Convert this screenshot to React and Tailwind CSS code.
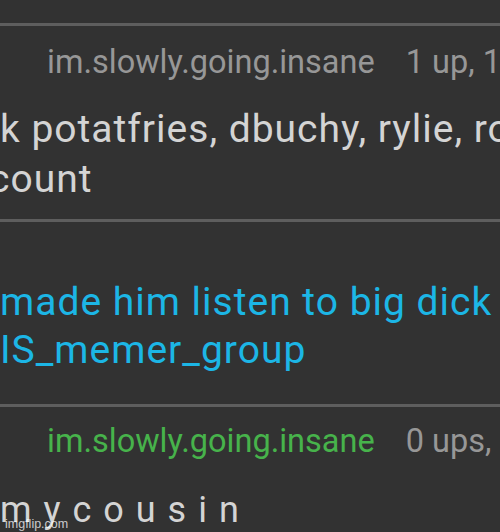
export default function App() {
  return (
    <div
      className="relative w-[500px] h-[532px] overflow-hidden bg-[#323232] flex flex-col"
      style={{ fontFamily: "Roboto, 'Noto Sans', sans-serif" }}
    >
      <div className="h-[23px] shrink-0" />
      <div className="h-[3px] shrink-0 bg-[#5e5e5e]" />
      <div className="mt-[16px] flex whitespace-nowrap pl-[47px] text-[32.5px] leading-[40px] text-[#979797]">
        <span>im.slowly.going.insane</span>
        <span className="ml-[31px]">1 up, 1 reply</span>
      </div>
      <div className="mt-[22px] whitespace-nowrap text-[39px] leading-[50px] tracking-[1px] text-[#d4d4d4]">
        <div>k potatfries, dbuchy, rylie, ro</div>
        <div className="-ml-[11px]">count</div>
      </div>
      <div className="mt-[15px] h-[3px] shrink-0 bg-[#5e5e5e]" />
      <div className="mt-[56px] whitespace-nowrap text-[39px] leading-[48px] tracking-[1px] text-[#1cb6e6]">
        <div>made him listen to big dick</div>
        <div>IS_memer_group</div>
      </div>
      <div className="mt-[30px] h-[3px] shrink-0 bg-[#5e5e5e]" />
      <div className="mt-[14px] flex whitespace-nowrap pl-[47px] text-[32.5px] leading-[40px]">
        <span className="text-[#47b34b]">im.slowly.going.insane</span>
        <span className="ml-[31px] text-[#979797]">0 ups, 1 reply</span>
      </div>
      <div className="mt-[24px] whitespace-nowrap text-[36px] leading-[50px] tracking-[12px] text-[#d4d4d4]">
        mycousin
      </div>
      <div
        className="absolute left-[5px] bottom-[1px] text-[12.5px] leading-[14px] text-white/75"
        style={{ fontFamily: "'Liberation Sans', Arial, sans-serif" }}
      >
        imgflip.com
      </div>
    </div>
  );
}
